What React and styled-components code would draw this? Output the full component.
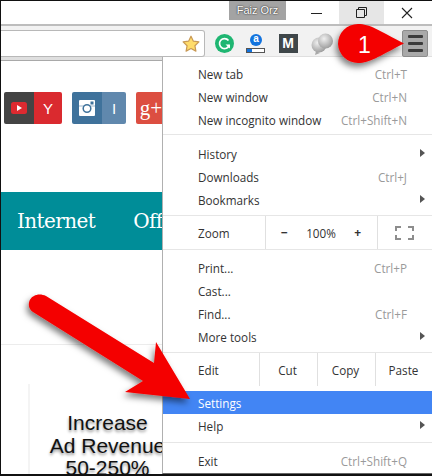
import React from "react";
import styled, { createGlobalStyle } from "styled-components";

const GlobalStyle = createGlobalStyle`
  html, body { margin: 0; padding: 0; background: #fff; }
  * { box-sizing: border-box; }
`;

const Window = styled.div`
  position: relative;
  width: 432px;
  height: 476px;
  overflow: hidden;
  display: flex;
  flex-direction: column;
  background: #fff;
  border-top: 1px solid #111;
  border-left: 1px solid #111;
  border-bottom: 2px solid #111;
  font-family: "Open Sans", "Liberation Sans", sans-serif;
`;

const TitleBar = styled.div`
  height: 23px;
  flex: none;
  display: flex;
  align-items: flex-start;
  padding-left: 228px;
`;

const UserBadge = styled.div`
  width: 57px;
  height: 19px;
  background: #a3a3a3;
  color: #fff;
  font: 11px "Liberation Sans", sans-serif;
  line-height: 18px;
  text-align: center;
  text-shadow: 0 0 2px #333, 0 0 1px #333;
`;

const WinButton = styled.div`
  width: 45px;
  height: 23px;
  display: flex;
  align-items: center;
  justify-content: center;
  background: ${(p) => (p.$active ? "#e6e6e6" : "transparent")};
  margin-left: ${(p) => p.$gap || 0}px;
`;

const Toolbar = styled.div`
  height: 37px;
  flex: none;
  display: flex;
  align-items: flex-start;
  background: #f2f2f2;
  border-top: 2px solid #bdbdbd;
  border-bottom: 1px solid #a9a9a9;
  padding-top: 4px;
  box-shadow: inset 0 -4px 0 #dfdfdf;
`;

const Omnibox = styled.div`
  width: 204px;
  height: 27px;
  flex: none;
  display: flex;
  align-items: center;
  justify-content: flex-end;
  padding-right: 4px;
  background: #fff;
  border: 1px solid #b8b8b8;
  border-left: none;
  border-radius: 0 3px 3px 0;
`;

const ExtensionIcons = styled.div`
  display: flex;
  align-items: center;
  height: 27px;
  gap: 12px;
  padding-left: 9px;
`;

const ExtSlot = styled.div`
  width: ${(p) => p.$w || 20}px;
  height: 20px;
  display: flex;
  align-items: center;
  justify-content: center;
  position: relative;
`;

const MBadge = styled.div`
  width: 19px;
  height: 19px;
  background: #3f474a;
  color: #fff;
  font: 900 14px "Liberation Sans", sans-serif;
  line-height: 19px;
  text-align: center;
`;

const ABubble = styled.div`
  width: 12px;
  height: 12px;
  margin-top: -7px;
  border-radius: 50%;
  background: #1273de;
  color: #fff;
  font: bold 10px "Liberation Sans", sans-serif;
  line-height: 10px;
  text-align: center;
`;

const Ruler = styled.div`
  position: absolute;
  left: 0;
  bottom: 1px;
  width: 19px;
  height: 5px;
  border: 1px solid #555;
  background: linear-gradient(90deg, #1273de 0 5px, #fff 5px);
`;

const MenuButton = styled.div`
  position: absolute;
  top: 29px;
  left: 401px;
  width: 26px;
  height: 27px;
  display: flex;
  flex-direction: column;
  align-items: center;
  justify-content: center;
  gap: 4px;
  background: #a9a9a9;
  border: 1px solid #8c8c8c;
  border-radius: 2px;
`;

const MenuBar = styled.span`
  display: block;
  width: 15px;
  height: 3px;
  border-radius: 1px;
  background: #3c3c3c;
`;

const PageArea = styled.div`
  flex: 1;
  min-height: 0;
  display: flex;
  flex-direction: column;
`;

const SocialRow = styled.div`
  display: flex;
  gap: 10px;
  margin-top: 31px;
  padding-left: 3px;
`;

const SocialButton = styled.div`
  height: 32px;
  display: flex;
  border-radius: 2px;
  overflow: hidden;
  flex: none;
`;

const SocialPart = styled.div`
  width: ${(p) => p.$w}px;
  background: ${(p) => p.$bg};
  color: ${(p) => p.$color || "#fff"};
  display: flex;
  align-items: center;
  justify-content: center;
  font: ${(p) => p.$font || "15px 'Liberation Sans', sans-serif"};
`;

const NavBar = styled.div`
  height: 58px;
  margin-top: 68px;
  flex: none;
  background: #008d98;
  color: #fff;
  display: flex;
  align-items: center;
  gap: 38px;
  padding: 0 0 0 16px;
  font: 20px "DejaVu Serif", serif;
  letter-spacing: -0.6px;
  white-space: nowrap;
`;

const Rule = styled.div`
  height: 1px;
  flex: none;
  margin-top: 94px;
  background: #ececec;
`;

const AdBox = styled.div`
  margin: 39px 0 0 27px;
  width: 157px;
  border-left: 2px solid #f4f4f4;
  padding-top: 28px;
  color: #111;
  font: 21px/22.5px "Liberation Sans", sans-serif;
  text-align: center;
  text-shadow: 0 2px 3px rgba(0, 0, 0, 0.45);
`;

const Menu = styled.div`
  position: absolute;
  top: 56px;
  left: 161px;
  width: 270px;
  height: 417px;
  background: #fff;
  border-left: 1px solid #b0b0b0;
  border-bottom: 1px solid #666;
  color: #333;
  font-size: 11.7px;
  display: flex;
  flex-direction: column;
`;

const Section = styled.div`
  padding: ${(p) => p.$top}px 0 ${(p) => p.$bottom}px;
`;

const Sep = styled.div`
  height: 1px;
  flex: none;
  background: #e6e6e6;
`;

const Item = styled.div`
  height: 23px;
  display: flex;
  align-items: center;
  padding: 0 25px 0 35px;
  position: relative;
  background: ${(p) => (p.$selected ? "#4285f4" : "transparent")};
  color: ${(p) => (p.$selected ? "#fff" : "inherit")};
`;

const Shortcut = styled.span`
  margin-left: auto;
  color: #9a9a9a;
`;

const SubArrow = styled.span`
  position: absolute;
  right: 7px;
  top: 7px;
  width: 0;
  height: 0;
  border-left: 5px solid #555;
  border-top: 4px solid transparent;
  border-bottom: 4px solid transparent;
`;

const ToolRow = styled.div`
  height: 33px;
  display: grid;
  grid-template-columns: ${(p) => p.$cols};
  align-items: stretch;
`;

const ToolLabel = styled.div`
  display: flex;
  align-items: center;
  padding-left: 35px;
`;

const ToolCell = styled.div`
  display: flex;
  align-items: center;
  justify-content: ${(p) => p.$justify || "center"};
  padding: ${(p) => p.$pad || 0};
  border-left: 1px solid #e0e0e0;
`;

const ZoomSign = styled.span`
  font-weight: 700;
  font-size: 12px;
`;

const OverlayArt = styled.svg`
  position: absolute;
  left: -1px;
  top: -1px;
  pointer-events: none;
  overflow: visible;
`;

const CalloutNumber = styled.div`
  position: absolute;
  left: 357px;
  top: 29px;
  color: #fff;
  font: 23px/30px "Liberation Sans", sans-serif;
`;

const Star = () => (
  <svg width="18" height="18" viewBox="0 0 18 18">
    <path
      d="M9 1.2l2.4 5 5.5.7-4 3.8 1 5.4L9 13.500l-4.900 2.600 1-5.400-4-3.800 5.500-.7z"
      fill="#ffdc6b"
      stroke="#c99a55"
      strokeWidth="1.2"
      strokeLinejoin="round"
    />
  </svg>
);

const GrammarlyIcon = () => (
  <svg width="19" height="19" viewBox="0 0 19 19">
    <circle cx="9.5" cy="9.500" r="9.500" fill="#1fb672" />
    <path d="M13.500 6.500a5 5 0 1 0 .8 4.500" fill="none" stroke="#fff" strokeWidth="1.700" />
    <path d="M10.500 10.500h4.500v4z" fill="#fff" />
  </svg>
);

const ChatIcon = () => (
  <svg width="24" height="22" viewBox="0 0 24 22">
    <defs>
      <radialGradient id="chatShade" cx="0.4" cy="0.35" r="0.7">
        <stop offset="0" stopColor="#f0f0f0" />
        <stop offset="1" stopColor="#9a9a9a" />
      </radialGradient>
    </defs>
    <circle cx="9" cy="12" r="7.500" fill="url(#chatShade)" />
    <circle cx="15.500" cy="8" r="7.500" fill="url(#chatShade)" />
    <path d="M6 18l-1 4 5-2z" fill="#a8a8a8" />
  </svg>
);

const YoutubeIcon = () => (
  <svg width="16" height="12" viewBox="0 0 16 12">
    <rect width="16" height="12" rx="2.500" fill="#dd2a30" />
    <path d="M6 3l5 3-5 3z" fill="#fff" />
  </svg>
);

const InstagramIcon = () => (
  <svg width="16" height="16" viewBox="0 0 16 16">
    <rect width="16" height="16" rx="1" fill="#fff" />
    <rect x="0" y="5.500" width="16" height="1" fill="#3f729b" opacity="0.5" />
    <circle cx="8" cy="8.500" r="3.800" fill="#fff" stroke="#3f729b" strokeWidth="1.500" />
    <rect x="11.500" y="1.500" width="3" height="3" fill="#3f729b" />
  </svg>
);

const FullscreenIcon = () => (
  <svg width="19" height="14" viewBox="0 0 19 14" fill="none" stroke="#8d8d8d" strokeWidth="2">
    <path d="M1 5V1h5M13 1h5v4M18 9v4h-5M6 13H1V9" />
  </svg>
);

const App = () => (
  <>
    <GlobalStyle />
    <Window>
      <TitleBar>
        <UserBadge>Faiz Orz</UserBadge>
        <WinButton $gap={8}>
          <svg width="11" height="11" viewBox="0 0 11 11">
            <path d="M0 6.500h11" stroke="#222" strokeWidth="1" />
          </svg>
        </WinButton>
        <WinButton $active>
          <svg width="11" height="11" viewBox="0 0 11 11" fill="none" stroke="#222">
            <path d="M.5 2.500h8v8h-8z" />
            <path d="M2.500 2.500v-2h8v8h-2" />
          </svg>
        </WinButton>
        <WinButton>
          <svg width="12" height="12" viewBox="0 0 12 12">
            <path d="M1 1l10 10M11 1L1 11" stroke="#222" strokeWidth="1.100" />
          </svg>
        </WinButton>
      </TitleBar>
      <Toolbar>
        <Omnibox>
          <Star />
        </Omnibox>
        <ExtensionIcons>
          <ExtSlot>
            <GrammarlyIcon />
          </ExtSlot>
          <ExtSlot>
            <ABubble>a</ABubble>
            <Ruler />
          </ExtSlot>
          <ExtSlot>
            <MBadge>M</MBadge>
          </ExtSlot>
          <ExtSlot $w={24}>
            <ChatIcon />
          </ExtSlot>
        </ExtensionIcons>
      </Toolbar>
      <MenuButton>
        <MenuBar />
        <MenuBar />
        <MenuBar />
      </MenuButton>
      <PageArea>
        <SocialRow>
          <SocialButton>
            <SocialPart $w={30} $bg="#444">
              <YoutubeIcon />
            </SocialPart>
            <SocialPart $w={28} $bg="#da2a2f">
              Y
            </SocialPart>
          </SocialButton>
          <SocialButton>
            <SocialPart $w={30} $bg="#3f729b">
              <InstagramIcon />
            </SocialPart>
            <SocialPart $w={24} $bg="#6088ad">
              I
            </SocialPart>
          </SocialButton>
          <SocialButton>
            <SocialPart $w={30} $bg="#dc4e41" $font="21px 'Liberation Serif', serif">
              g+
            </SocialPart>
          </SocialButton>
        </SocialRow>
        <NavBar>
          <span>Internet</span>
          <span>Office</span>
        </NavBar>
        <Rule />
        <AdBox>
          Increase
          <br />
          Ad Revenue
          <br />
          50-250%
        </AdBox>
      </PageArea>

      <Menu>
        <Section $top={5} $bottom={3}>
          <Item>
            New tab<Shortcut>Ctrl+T</Shortcut>
          </Item>
          <Item>
            New window<Shortcut>Ctrl+N</Shortcut>
          </Item>
          <Item>
            New incognito window<Shortcut>Ctrl+Shift+N</Shortcut>
          </Item>
        </Section>
        <Sep />
        <Section $top={7} $bottom={4}>
          <Item>
            History
            <SubArrow />
          </Item>
          <Item>
            Downloads<Shortcut>Ctrl+J</Shortcut>
          </Item>
          <Item>
            Bookmarks
            <SubArrow />
          </Item>
        </Section>
        <Sep />
        <ToolRow $cols="102px 112px 1fr">
          <ToolLabel>Zoom</ToolLabel>
          <ToolCell $justify="space-between" $pad="0 16px 0 15px">
            <ZoomSign>−</ZoomSign>
            <span>100%</span>
            <ZoomSign>+</ZoomSign>
          </ToolCell>
          <ToolCell $justify="flex-start" $pad="0 0 0 17px">
            <FullscreenIcon />
          </ToolCell>
        </ToolRow>
        <Sep />
        <Section $top={6} $bottom={4}>
          <Item>
            Print...<Shortcut>Ctrl+P</Shortcut>
          </Item>
          <Item>Cast...</Item>
          <Item>
            Find...<Shortcut>Ctrl+F</Shortcut>
          </Item>
          <Item>
            More tools
            <SubArrow />
          </Item>
        </Section>
        <Sep />
        <ToolRow $cols="96px 58px 58px 1fr">
          <ToolLabel>Edit</ToolLabel>
          <ToolCell $pad="0 2px 0 0">Cut</ToolCell>
          <ToolCell $pad="0 2px 0 0">Copy</ToolCell>
          <ToolCell $pad="0 1px 0 0">Paste</ToolCell>
        </ToolRow>
        <Section $top={5} $bottom={5}>
          <Item $selected>Settings</Item>
          <Item>
            Help
            <SubArrow />
          </Item>
        </Section>
        <Sep />
        <Section $top={6} $bottom={0}>
          <Item>
            Exit<Shortcut>Ctrl+Shift+Q</Shortcut>
          </Item>
        </Section>
      </Menu>

      <OverlayArt width="432" height="476" viewBox="0 0 432 476">
        <defs>
          <filter id="arrowShadow" x="-30%" y="-30%" width="160%" height="160%">
            <feDropShadow dx="-2" dy="4" stdDeviation="3" floodColor="#000" floodOpacity="0.5" />
          </filter>
        </defs>
        <path
          d="M338 44a20 20 0 0 1 20-20c12 0 20 6 46 19.500c-26 13-34 19.500-46 19.500a20 20 0 0 1-20-19z"
          fill="#f40000"
          filter="url(#arrowShadow)"
        />
        <path
          d="M46 296L154 363L156 342L190 399L125 392L143 381L33 312C26 307 29 298 34 296C37 294 42 294 46 296z"
          fill="#f40000"
          filter="url(#arrowShadow)"
        />
      </OverlayArt>
      <CalloutNumber>1</CalloutNumber>
    </Window>
  </>
);

export default App;
